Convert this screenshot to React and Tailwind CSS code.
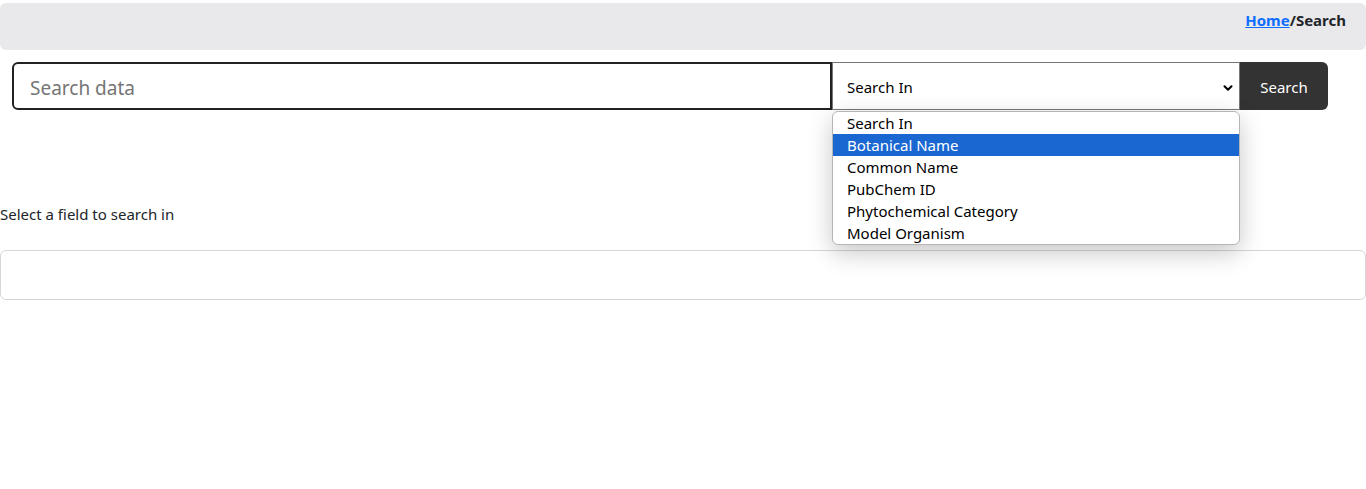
import { ChevronDown } from "lucide-react";

const options = [
  "Search In",
  "Botanical Name",
  "Common Name",
  "PubChem ID",
  "Phytochemical Category",
  "Model Organism",
];

export default function App() {
  return (
    <div className="min-h-[489px] bg-white text-[#212529] font-['Noto_Sans','Open_Sans',sans-serif]">
      {/* fil d'ariane */}
      <div className="pt-[3px]">
        <div className="h-[47px] bg-[#e9e8eb] rounded-md flex justify-end pr-5 pt-[6px] text-[15px] font-bold">
          <a href="#" className="text-[#0d6efd] underline">
            Home
          </a>
          <span>/Search</span>
        </div>
      </div>

      {/* barre de recherche */}
      <div className="flex mt-3 ml-3 w-[1316px] h-[48px] relative">
        <input
          placeholder="Search data"
          className="w-[820px] h-full border-2 border-[#222] rounded-l-md px-4 pt-[3px] text-[19px] placeholder:text-[#757575] outline-none"
        />
        <div className="w-[408px] h-full border border-[#777] flex items-center justify-between pl-[14px] pr-[4px] pt-[3px] text-[15px] text-black">
          <span>Search In</span>
          <ChevronDown size={14} strokeWidth={3.5} />
        </div>
        <button className="w-[88px] h-full bg-[#333] text-white text-[15px] pt-[2px] rounded-r-md">
          Search
        </button>

        {/* liste déroulante ouverte */}
        <div className="absolute left-[820px] top-[49px] w-[408px] bg-white border border-[#b5b5b5] rounded-md shadow-[0_8px_24px_rgba(0,0,0,0.22)] overflow-hidden z-10">
          {options.map((opt, i) => (
            <div
              key={opt}
              className={`h-[22px] pl-[14px] flex items-center text-[15px] ${
                i === 1 ? "bg-[#1a67d2] text-white" : "text-black"
              }`}
            >
              {opt}
            </div>
          ))}
        </div>
      </div>

      <p className="mt-[94px] text-[15px] leading-5">Select a field to search in</p>

      <div className="mt-[26px] h-[50px] border border-[#d6d6d6] rounded-md"></div>
    </div>
  );
}
